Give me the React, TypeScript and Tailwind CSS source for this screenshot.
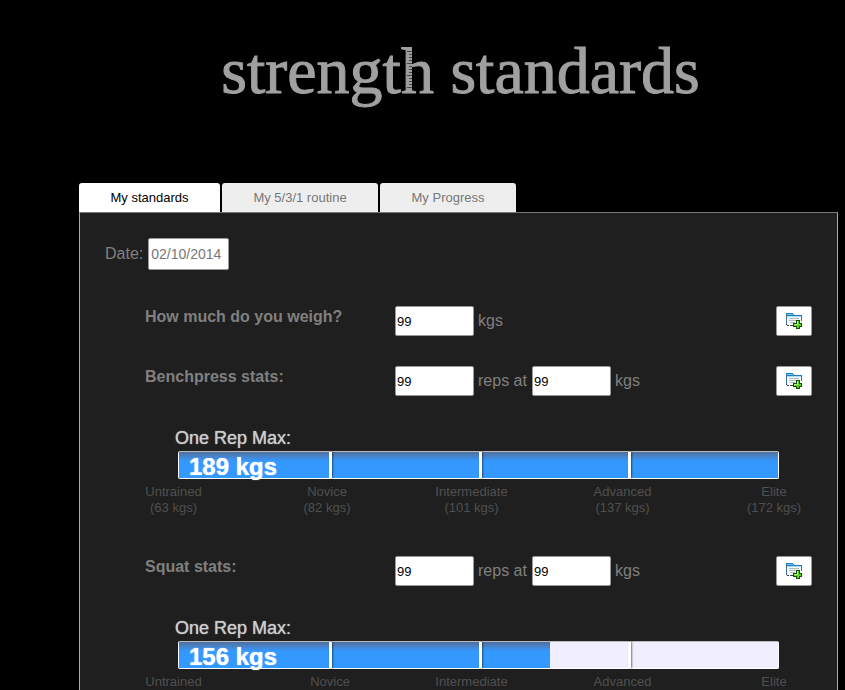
import { useState } from 'react';

const tabs = ['My standards', 'My 5/3/1 routine', 'My Progress'];

const tabWidths = ['w-[141px]', 'w-[156px]', 'w-[136px]'];

type Level = { name: string; weight?: string };

function Logo() {
  return (
    <h1 className="pl-[76px] text-center text-[66px] leading-[76px] text-[#a0a0a0] [-webkit-text-stroke:1px_#a0a0a0]">
      strengt
      <span className="relative inline-block">
        h
        <svg
          className="absolute left-[6px] top-[17px]"
          width="5"
          height="40"
          viewBox="0 0 5 40"
          aria-hidden="true"
        >
          <path
            d="M0 1.5h5M2 4.5h3M2 7.5h3M2 10.5h3M0 13.5h5M2 16.5h3M2 19.5h3M2 22.5h3M0 25.5h5M2 28.5h3M2 31.5h3M2 34.5h3M0 37.5h5"
            stroke="#444"
            strokeWidth="1"
          />
        </svg>
      </span>{' '}
      standards
    </h1>
  );
}

function AddIcon() {
  return (
    <svg width="16" height="16" viewBox="0 0 16 16" shapeRendering="crispEdges" aria-hidden="true">
      <path d="M0 1h15v11H0z" fill="#f4f8fb" />
      <path d="M0 0h7v1H0zM7 1h1v1H7zM0 2h16v1H0z" fill="#1b7fc8" />
      <path d="M1 1h6v1H1z" fill="#7cc4ee" />
      <path d="M1 3h14v1H1z" fill="#a9dcf8" />
      <path d="M0 1h1v10H0zM15 3h1v5h-1z" fill="#3f7298" />
      <path d="M3 5h10v1H3zM3 7h10v1H3zM4 9h5v1H4z" fill="#b4bbbf" />
      <path d="M0 11h1v1H0zM1 12h2v1H1zM4 12h3v1H4z" fill="#35404a" />
      <path d="M10 7h4v3h2v4h-2v2h-4v-2H7v-4h3z" fill="#174f0a" />
      <path d="M11 8h2v3h2v2h-2v2h-2v-2H8v-2h3z" fill="#5fd322" />
      <path d="M11 8h1v3h-1zM8 11h4v1H8z" fill="#b5f27c" />
    </svg>
  );
}

function NumberBox({ label }: { label: string }) {
  return (
    <input
      type="text"
      aria-label={label}
      defaultValue="99"
      className="h-[30px] w-[79px] rounded-xs border border-[#999] bg-white px-px text-[13px] text-black"
    />
  );
}

function StatRow({ title, reps }: { title: string; reps?: boolean }) {
  return (
    <div className="flex h-[30px] items-center pl-10 text-base leading-5">
      <h2 className="w-[250px] self-start font-bold leading-[22px]">{title}</h2>
      <div className="flex flex-1 items-center gap-1">
        {reps && (
          <>
            <NumberBox label={`${title} reps`} />
            <span className="w-[50px] whitespace-nowrap">reps at</span>
          </>
        )}
        <NumberBox label={`${title} kgs`} />
        <span>kgs</span>
      </div>
      <button
        type="button"
        aria-label={`Add ${title}`}
        className="flex h-[30px] w-9 items-center justify-center rounded-xs border border-[#999] bg-white"
      >
        <AddIcon />
      </button>
    </div>
  );
}

function MaxBar({
  value,
  percent,
  levels,
  columns,
}: {
  value: string;
  percent: number;
  levels: Level[];
  columns: string;
}) {
  return (
    <section className="pt-8">
      <h3 className="pb-0.5 pl-[70px] text-lg leading-[21px] text-[#ccc] [text-shadow:0_0_1px_#ccc]">One Rep Max:</h3>
      <div className="relative ml-[73px] mr-[33px] h-7 rounded-xs border border-white border-t-[#bbb] bg-[#f0eeff]">
        <div
          className="h-full bg-[#3399ff] bg-linear-to-b from-[#4f6f9c] to-[#3399ff] to-35%"
          style={{ width: `${percent}%` }}
        />
        <span className="absolute inset-y-0 left-1/4 w-[3px] bg-white shadow-[1px_0_2px_rgba(0,0,0,0.5)]" />
        <span className="absolute inset-y-0 left-1/2 w-[3px] bg-white shadow-[1px_0_2px_rgba(0,0,0,0.5)]" />
        <span className="absolute inset-y-0 left-3/4 w-[3px] bg-white shadow-[1px_0_2px_rgba(0,0,0,0.5)]" />
        <strong className="absolute left-[10px] top-0 text-2xl leading-[30px] text-white [text-shadow:0_0_1px_#fff]">
          {value}
        </strong>
      </div>
      <ul className={`-mr-[25px] grid pt-[5px] text-center text-[13px] leading-4 text-[#505050] ${columns}`}>
        {levels.map((level) => (
          <li key={level.name}>
            {level.name}
            {level.weight && <span className="block">({level.weight})</span>}
          </li>
        ))}
      </ul>
    </section>
  );
}

export default function App() {
  const [active, setActive] = useState(0);

  return (
    <div className="h-screen overflow-hidden bg-black font-['Liberation_Sans',Arial,sans-serif] text-[#808080]">
      <header className="h-[183px] pt-[33px] font-['Liberation_Serif','Times_New_Roman',serif]">
        <Logo />
      </header>
      <main className="ml-[79px] mr-[7px]">
        <nav className="flex gap-0.5 text-[13px]" role="tablist">
          {tabs.map((tab, i) => (
            <button
              key={tab}
              type="button"
              role="tab"
              aria-selected={i === active}
              onClick={() => setActive(i)}
              className={`h-[29px] rounded-t-[3px] ${tabWidths[i]} ${
                i === active ? 'bg-white text-black' : 'bg-[#eee] text-[#777]'
              }`}
            >
              {tab}
            </button>
          ))}
        </nav>
        <div className="min-h-screen border border-[#aaa] border-t-[#777] bg-[#1f1f1f] px-[25px] pt-[25px]">
          <div className="flex items-center gap-[5px]">
            <label htmlFor="date" className="text-base">
              Date:
            </label>
            <input
              id="date"
              type="text"
              defaultValue="02/10/2014"
              className="h-8 w-[81px] rounded-xs border border-[#999] bg-white px-0.5 text-[14px] text-[#777]"
            />
          </div>
          <div className="flex flex-col gap-[30px] pt-9">
            <StatRow title="How much do you weigh?" />
            <StatRow title="Benchpress stats:" reps />
          </div>
          <MaxBar
            value="189 kgs"
            percent={100}
            columns="grid-cols-[137px_170px_119px_183px_120px]"
            levels={[
              { name: 'Untrained', weight: '63 kgs' },
              { name: 'Novice', weight: '82 kgs' },
              { name: 'Intermediate', weight: '101 kgs' },
              { name: 'Advanced', weight: '137 kgs' },
              { name: 'Elite', weight: '172 kgs' },
            ]}
          />
          <div className="pt-10">
            <StatRow title="Squat stats:" reps />
          </div>
          <MaxBar
            value="156 kgs"
            percent={62}
            columns="grid-cols-[137px_176px_107px_195px_108px]"
            levels={[
              { name: 'Untrained' },
              { name: 'Novice' },
              { name: 'Intermediate' },
              { name: 'Advanced' },
              { name: 'Elite' },
            ]}
          />
        </div>
      </main>
    </div>
  );
}
